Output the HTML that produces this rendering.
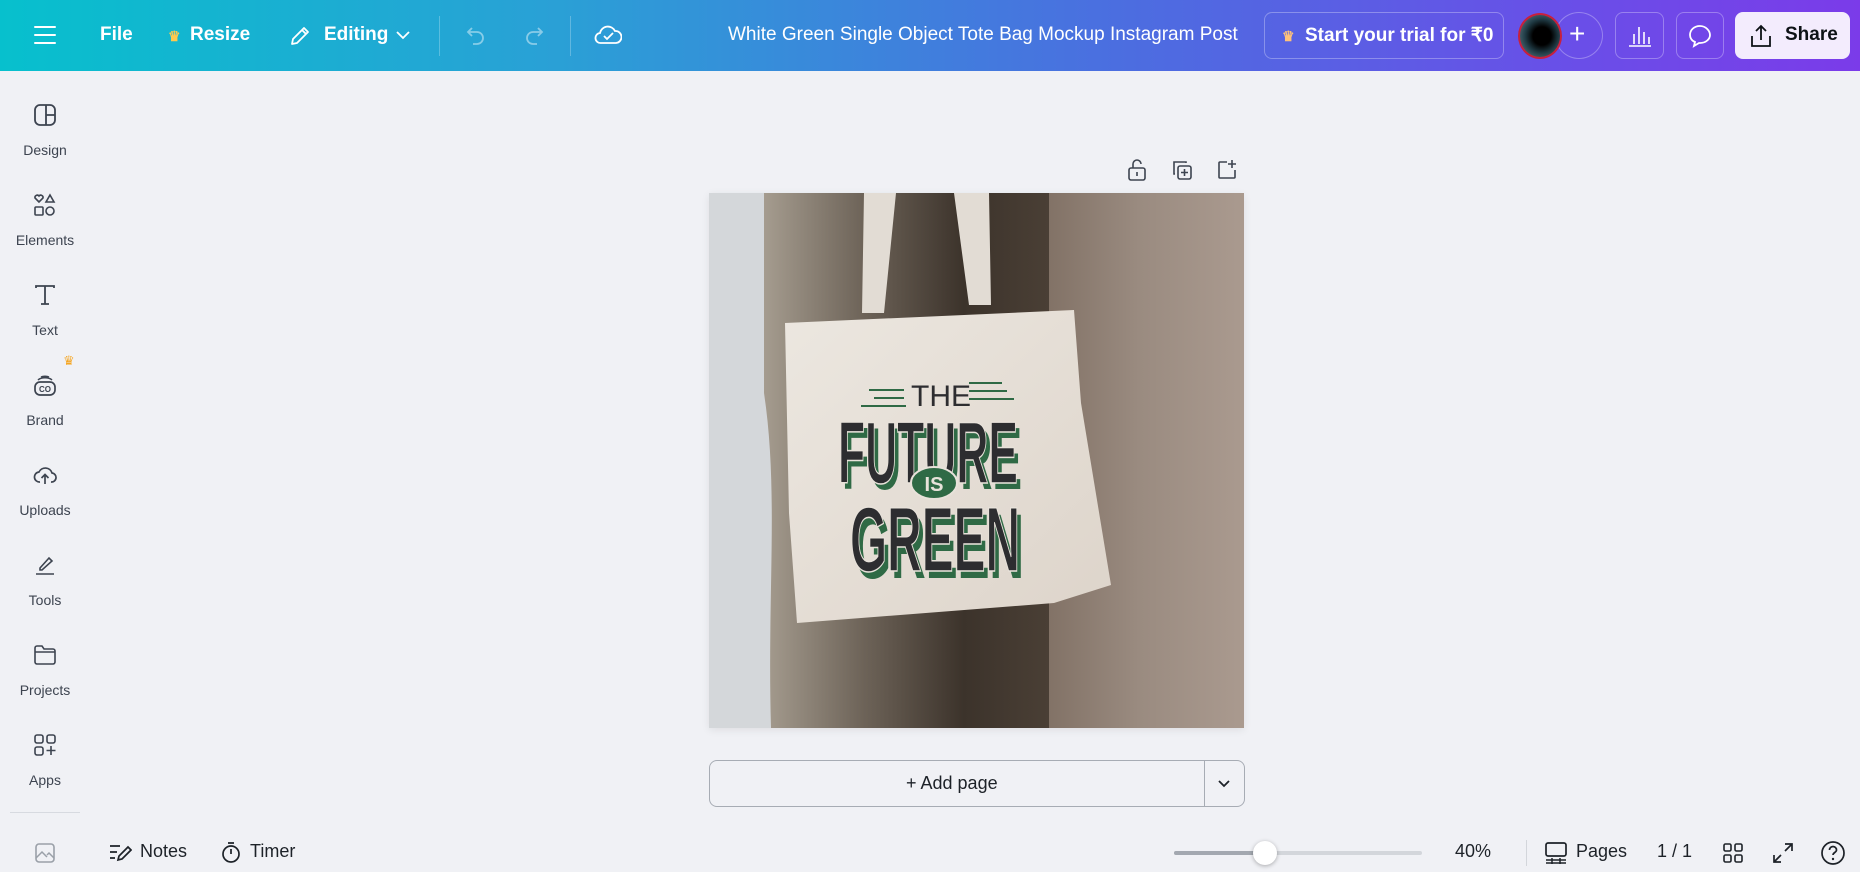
<!DOCTYPE html>
<html><head><meta charset="utf-8"><style>
*{box-sizing:border-box;margin:0;padding:0}
body{width:1860px;height:872px;overflow:hidden;background:#f0f1f5;font-family:"Liberation Sans",sans-serif;position:relative;color:#0d1216}
.top{position:absolute;left:0;top:0;width:1860px;height:71px;background:linear-gradient(90deg,#07c0cd 0%,#2aa0d6 30%,#4b6ee0 60%,#6a4ee8 85%,#7b3be9 100%);color:#fff}
.top .t{position:absolute;top:24px;font-size:19px;font-weight:bold;white-space:nowrap}
.abs{position:absolute}
.vd{position:absolute;top:16px;width:1px;height:40px;background:rgba(255,255,255,.25)}
.btn{position:absolute;border:1px solid rgba(255,255,255,.3);border-radius:8px}
.side .lbl{position:absolute;width:90px;text-align:center;font-size:14px;color:#3d4450}
.side svg{position:absolute}
.bot{position:absolute;font-size:18px;color:#1d2228;top:841px}
</style></head><body>
<div class="top">
 <svg class="abs" style="left:34px;top:25px" width="22" height="20" viewBox="0 0 22 20"><path d="M1 2h20M1 10h20M1 18h20" stroke="#fff" stroke-width="2" stroke-linecap="round"/></svg>
 <div class="t" style="left:100px">File</div>
 <div class="t" style="left:168px;font-size:14px;top:28px;color:#ffc94d">♛</div>
 <div class="t" style="left:190px">Resize</div>
 <svg class="abs" style="left:288px;top:24px" width="24" height="24" viewBox="0 0 24 24"><path d="M4 20l1-5L16 4l4 4L9 19zM14 6l4 4" fill="none" stroke="#fff" stroke-width="1.8" stroke-linejoin="round"/></svg>
 <div class="t" style="left:324px">Editing</div>
 <svg class="abs" style="left:396px;top:30px" width="14" height="10" viewBox="0 0 14 10"><path d="M1 2l6 6 6-6" fill="none" stroke="#fff" stroke-width="1.8"/></svg>
 <div class="vd" style="left:439px"></div>
 <svg class="abs" style="left:464px;top:24px" width="24" height="24" viewBox="0 0 24 24"><path d="M8 4L4 8l4 4M4 8h9a6 6 0 010 12H9" fill="none" stroke="rgba(255,255,255,.45)" stroke-width="1.8"/></svg>
 <svg class="abs" style="left:522px;top:24px" width="24" height="24" viewBox="0 0 24 24"><path d="M16 4l4 4-4 4M20 8h-9a6 6 0 000 12h4" fill="none" stroke="rgba(255,255,255,.45)" stroke-width="1.8"/></svg>
 <div class="vd" style="left:570px"></div>
 <svg class="abs" style="left:594px;top:22px" width="28" height="26" viewBox="0 0 28 26"><path d="M7 21a5 5 0 01-1-10 8 8 0 0115-2 6 6 0 011 12z" fill="none" stroke="#fff" stroke-width="1.8"/><path d="M10 14l3 3 6-6" fill="none" stroke="#fff" stroke-width="1.8"/></svg>
 <div class="t" style="left:728px;font-weight:normal;font-size:19px">White Green Single Object Tote Bag Mockup Instagram Post</div>
 <div class="btn" style="left:1264px;top:12px;width:240px;height:47px"></div>
 <div class="t" style="left:1282px;font-size:14px;top:28px;color:#ffc27a">♛</div>
 <div class="t" style="left:1305px">Start your trial for ₹0</div>
 <div class="btn" style="left:1555px;top:12px;width:48px;height:47px;border-radius:50%"></div>
 <div class="abs" style="left:1518px;top:13px;width:44px;height:46px;border-radius:50%;background:radial-gradient(circle at 55% 50%,#000 0 30%,#1f3a44 55%,#4b6872 80%);border:2px solid #c8203c"></div>
 <div class="t" style="left:1569px;top:18px;font-size:28px;font-weight:normal">+</div>
 <div class="btn" style="left:1615px;top:12px;width:49px;height:47px"></div>
 <svg class="abs" style="left:1627px;top:24px" width="26" height="24" viewBox="0 0 26 24"><path d="M2 22h22M7 20V10M12 20V3M17 20V8M22 20v-7" stroke="#fff" stroke-width="1.6" fill="none"/></svg>
 <div class="btn" style="left:1676px;top:12px;width:48px;height:47px"></div>
 <svg class="abs" style="left:1687px;top:23px" width="26" height="26" viewBox="0 0 26 26"><path d="M13 3C7 3 3 7 3 12c0 3 2 6 5 7l-1 4 5-3h1c6 0 10-4 10-8s-4-9-10-9z" fill="none" stroke="#fff" stroke-width="1.8"/></svg>
 <div class="abs" style="left:1735px;top:12px;width:115px;height:47px;background:#f3ecfd;border-radius:8px"></div>
 <svg class="abs" style="left:1748px;top:23px" width="26" height="26" viewBox="0 0 26 26"><path d="M13 17V3M8 8l5-5 5 5M4 13v10h18V13" fill="none" stroke="#0d1216" stroke-width="1.8"/></svg>
 <div class="t" style="left:1785px;color:#0d1216">Share</div>
</div>

<div class="side">
 <svg style="left:33px;top:103px" width="24" height="24" viewBox="0 0 24 24"><rect x="2" y="2" width="20" height="20" rx="5" fill="none" stroke="#3d4450" stroke-width="1.8"/><path d="M13 2v20M13 12h9" stroke="#3d4450" stroke-width="1.8"/></svg>
 <div class="lbl" style="left:0;top:142px">Design</div>
 <svg style="left:33px;top:193px" width="24" height="24" viewBox="0 0 24 24"><path d="M6 9L2 5a2.3 2.3 0 014-2 2.3 2.3 0 014 2z M17 2l4 7h-8z" fill="none" stroke="#3d4450" stroke-width="1.6"/><rect x="2" y="14" width="8" height="8" rx="1" fill="none" stroke="#3d4450" stroke-width="1.6"/><circle cx="17" cy="18" r="4" fill="none" stroke="#3d4450" stroke-width="1.6"/></svg>
 <div class="lbl" style="left:0;top:232px">Elements</div>
 <svg style="left:33px;top:283px" width="24" height="24" viewBox="0 0 24 24"><path d="M3 5V3h18v2M12 3v18M8 21h8" fill="none" stroke="#3d4450" stroke-width="1.8"/></svg>
 <div class="lbl" style="left:0;top:322px">Text</div>
 <div class="abs" style="left:63px;top:353px;font-size:13px;color:#f5a623">♛</div>
 <svg style="left:33px;top:373px" width="24" height="24" viewBox="0 0 24 24"><rect x="2" y="9" width="20" height="13" rx="5" fill="none" stroke="#3d4450" stroke-width="1.7"/><path d="M5 7c3-3 11-3 14 0M8 4c2-1 6-1 8 0" fill="none" stroke="#3d4450" stroke-width="1.5"/><text x="12" y="19" font-size="8" text-anchor="middle" fill="#3d4450" font-family="Liberation Sans" font-weight="bold">CO</text></svg>
 <div class="lbl" style="left:0;top:412px">Brand</div>
 <svg style="left:33px;top:463px" width="24" height="24" viewBox="0 0 24 24"><path d="M7 19a5 5 0 01-1-10 7 7 0 0113 1 4.5 4.5 0 01-1 9" fill="none" stroke="#3d4450" stroke-width="1.7"/><path d="M12 21v-9M8.5 15l3.5-3.5 3.5 3.5" fill="none" stroke="#3d4450" stroke-width="1.7"/></svg>
 <div class="lbl" style="left:0;top:502px">Uploads</div>
 <svg style="left:33px;top:553px" width="24" height="24" viewBox="0 0 24 24"><path d="M7 15l9-10 3 3-10 9H7z" fill="none" stroke="#3d4450" stroke-width="1.6"/><path d="M3 21h18" stroke="#3d4450" stroke-width="1.6"/></svg>
 <div class="lbl" style="left:0;top:592px">Tools</div>
 <svg style="left:33px;top:643px" width="24" height="24" viewBox="0 0 24 24"><path d="M2 5a2 2 0 012-2h5l2 3h9a2 2 0 012 2v11a2 2 0 01-2 2H4a2 2 0 01-2-2zM2 9h20" fill="none" stroke="#3d4450" stroke-width="1.6"/></svg>
 <div class="lbl" style="left:0;top:682px">Projects</div>
 <svg style="left:33px;top:733px" width="24" height="24" viewBox="0 0 24 24"><rect x="2" y="2" width="8" height="8" rx="2" fill="none" stroke="#3d4450" stroke-width="1.6"/><rect x="14" y="2" width="8" height="8" rx="2" fill="none" stroke="#3d4450" stroke-width="1.6"/><rect x="2" y="14" width="8" height="8" rx="2" fill="none" stroke="#3d4450" stroke-width="1.6"/><path d="M18 13v9M13.5 17.5h9" stroke="#3d4450" stroke-width="1.6"/></svg>
 <div class="lbl" style="left:0;top:772px">Apps</div>
 <div class="abs" style="left:10px;top:812px;width:70px;height:1px;background:#d7dae0"></div>
 <svg style="left:34px;top:842px" width="22" height="22" viewBox="0 0 22 22"><rect x="2" y="2" width="18" height="18" rx="3" fill="none" stroke="#9aa0a8" stroke-width="1.6"/><path d="M2 16l6-6 5 5M13 13l2-2 5 5" fill="none" stroke="#9aa0a8" stroke-width="1.5"/></svg>
</div>

<svg class="abs" style="left:1126px;top:158px" width="22" height="24" viewBox="0 0 22 24"><rect x="3" y="10" width="16" height="12" rx="2" fill="none" stroke="#3d4450" stroke-width="1.6"/><path d="M7 10V6a4 4 0 018 0" fill="none" stroke="#3d4450" stroke-width="1.6"/><path d="M11 14v4" stroke="#3d4450" stroke-width="1.6"/></svg>
<svg class="abs" style="left:1171px;top:159px" width="22" height="22" viewBox="0 0 22 22"><rect x="7" y="7" width="13" height="13" rx="2" fill="none" stroke="#3d4450" stroke-width="1.6"/><path d="M4 15H3V3h12v1M13.5 10v7M10 13.5h7" fill="none" stroke="#3d4450" stroke-width="1.6"/></svg>
<svg class="abs" style="left:1216px;top:159px" width="22" height="22" viewBox="0 0 22 22"><path d="M11 3H4a1 1 0 00-1 1v14a1 1 0 001 1h14a1 1 0 001-1v-7M16 1v8M12 5h8" fill="none" stroke="#3d4450" stroke-width="1.6"/></svg>

<svg class="abs" style="left:709px;top:193px;box-shadow:0 2px 8px rgba(0,0,0,.08)" width="535" height="535" viewBox="0 0 535 535">
 <defs>
  <linearGradient id="wall" x1="0" y1="0" x2="1" y2="0"><stop offset="0" stop-color="#7e6e62"/><stop offset="0.5" stop-color="#9a8b80"/><stop offset="1" stop-color="#aa9a8f"/></linearGradient>
  <linearGradient id="cloth" x1="0" y1="0" x2="1" y2="0"><stop offset="0" stop-color="#a59c8f"/><stop offset="0.35" stop-color="#6d6358"/><stop offset="0.7" stop-color="#3c332b"/><stop offset="1" stop-color="#4a3f35"/></linearGradient>
  <linearGradient id="bag" x1="0" y1="0" x2="1" y2="1"><stop offset="0" stop-color="#ece7e0"/><stop offset="1" stop-color="#ddd4ca"/></linearGradient>
 </defs>
 <rect width="535" height="535" fill="#d4d7da"/>
 <rect x="325" width="210" height="535" fill="url(#wall)"/>
 <path d="M55 0H340V535H62C58 400 70 300 55 200z" fill="url(#cloth)"/>
 <path d="M155 0h32l-12 120h-22zM245 0h35l2 112h-22z" fill="#e2dcd4"/>
 <path d="M76 130L365 117L372 210L402 392L345 410L88 430L80 320z" fill="url(#bag)"/>
 <g font-family="Liberation Sans" font-weight="bold" text-anchor="middle">
  <path d="M160 197h35M165 205h30M152 213h45M260 190h33M260 198h38M260 206h45" stroke="#2f6a45" stroke-width="2"/>
  <text x="232" y="213" font-size="30" fill="#2d2d30" font-weight="normal">THE</text>
  <text x="223" y="296" font-size="88" fill="#2f6a45" textLength="180" lengthAdjust="spacingAndGlyphs">FUTURE</text>
  <text x="219" y="290" font-size="88" fill="#2d2d30" stroke="#e8e2da" stroke-width="1.5" textLength="180" lengthAdjust="spacingAndGlyphs">FUTURE</text>
  <ellipse cx="225" cy="290" rx="23" ry="16" fill="#2f6a45" stroke="#e8e2da" stroke-width="2"/>
  <text x="225" y="298" font-size="20" fill="#e8e2da">IS</text>
  <text x="230" y="385" font-size="92" fill="#2f6a45" textLength="170" lengthAdjust="spacingAndGlyphs">GREEN</text>
  <text x="226" y="378" font-size="92" fill="#2d2d30" stroke="#e8e2da" stroke-width="1.5" textLength="170" lengthAdjust="spacingAndGlyphs">GREEN</text>
 </g>
</svg>

<div class="abs" style="left:709px;top:760px;width:536px;height:47px;border:1px solid #a7acb4;border-radius:8px;background:#f0f1f5"></div>
<div class="abs" style="left:1204px;top:761px;width:1px;height:45px;background:#a7acb4"></div>
<div class="abs" style="left:906px;top:773px;font-size:18px;color:#1d2228">+ Add page</div>
<svg class="abs" style="left:1217px;top:779px" width="14" height="10" viewBox="0 0 14 10"><path d="M2 2l5 5 5-5" fill="none" stroke="#1d2228" stroke-width="1.8"/></svg>

<svg class="abs" style="left:108px;top:842px" width="24" height="22" viewBox="0 0 24 22"><path d="M2 4h10M2 10h7M2 16h5M10 18l1-4 9-9 3 3-9 9z" fill="none" stroke="#1d2228" stroke-width="1.7"/></svg>
<div class="bot" style="left:140px">Notes</div>
<svg class="abs" style="left:219px;top:840px" width="24" height="24" viewBox="0 0 24 24"><circle cx="12" cy="14" r="8" fill="none" stroke="#1d2228" stroke-width="1.7"/><path d="M9 3h6M12 14V9" stroke="#1d2228" stroke-width="1.7"/></svg>
<div class="bot" style="left:250px">Timer</div>
<div class="abs" style="left:1174px;top:851px;width:248px;height:4px;border-radius:2px;background:#d3d6db"></div>
<div class="abs" style="left:1174px;top:851px;width:91px;height:4px;border-radius:2px;background:#a3a8b0"></div>
<div class="abs" style="left:1253px;top:841px;width:24px;height:24px;border-radius:50%;background:#fff;box-shadow:0 1px 4px rgba(0,0,0,.3)"></div>
<div class="bot" style="left:1455px">40%</div>
<div class="abs" style="left:1526px;top:840px;width:1px;height:26px;background:#d3d6db"></div>
<svg class="abs" style="left:1544px;top:841px" width="24" height="24" viewBox="0 0 24 24"><rect x="2" y="2" width="20" height="13" rx="2" fill="none" stroke="#1d2228" stroke-width="1.7"/><path d="M2 19h20M2 22h20M8 17v6M16 17v6" stroke="#1d2228" stroke-width="1.5"/></svg>
<div class="bot" style="left:1576px">Pages</div>
<div class="bot" style="left:1657px">1 / 1</div>
<svg class="abs" style="left:1722px;top:842px" width="22" height="22" viewBox="0 0 22 22"><rect x="2" y="2" width="7" height="7" rx="1.5" fill="none" stroke="#1d2228" stroke-width="1.6"/><rect x="13" y="2" width="7" height="7" rx="1.5" fill="none" stroke="#1d2228" stroke-width="1.6"/><rect x="2" y="13" width="7" height="7" rx="1.5" fill="none" stroke="#1d2228" stroke-width="1.6"/><rect x="13" y="13" width="7" height="7" rx="1.5" fill="none" stroke="#1d2228" stroke-width="1.6"/></svg>
<svg class="abs" style="left:1772px;top:842px" width="22" height="22" viewBox="0 0 22 22"><path d="M13 2h7v7M20 2l-7 7M9 20H2v-7M2 20l7-7" fill="none" stroke="#1d2228" stroke-width="1.7"/></svg>
<svg class="abs" style="left:1820px;top:840px" width="26" height="26" viewBox="0 0 26 26"><circle cx="13" cy="13" r="11" fill="none" stroke="#1d2228" stroke-width="1.7"/><path d="M9.5 10a3.5 3.5 0 117 0c0 2.5-3.5 2.5-3.5 5" fill="none" stroke="#1d2228" stroke-width="1.7"/><circle cx="13" cy="19" r="1.2" fill="#1d2228"/></svg>
</body></html>
